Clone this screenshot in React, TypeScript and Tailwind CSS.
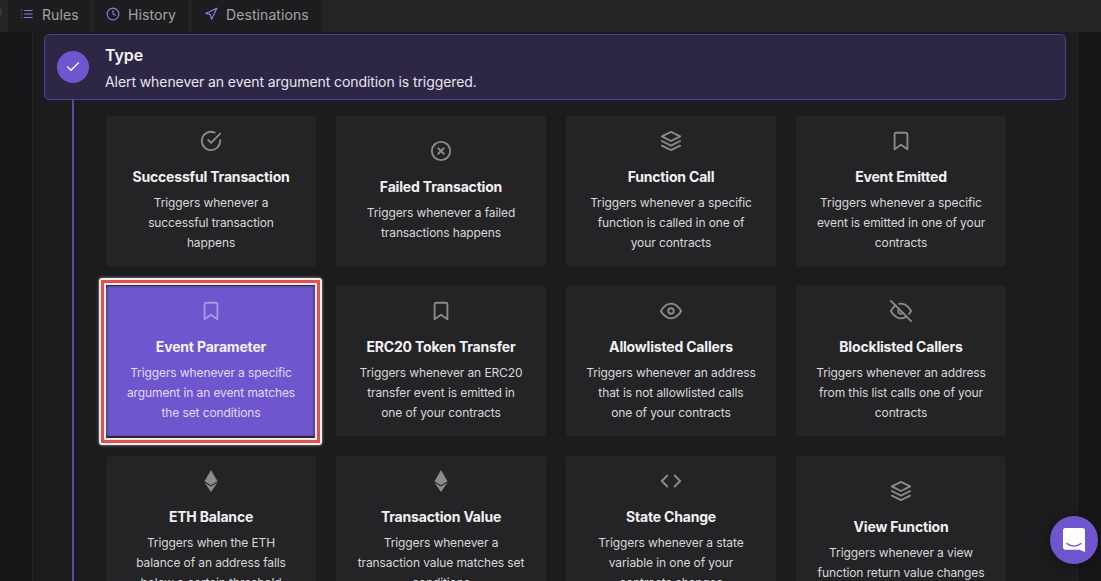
import type { IconType } from "react-icons";
import { FiBookmark, FiCheck, FiCheckCircle, FiClock, FiCode, FiEye, FiEyeOff, FiLayers, FiList, FiNavigation, FiXCircle } from "react-icons/fi";
import { FaEthereum } from "react-icons/fa";

type Trigger = { icon: IconType; title: string; lines: string[]; selected?: boolean };

const triggers: Trigger[] = [
  { icon: FiCheckCircle, title: "Successful Transaction", lines: ["Triggers whenever a", "successful transaction", "happens"] },
  { icon: FiXCircle, title: "Failed Transaction", lines: ["Triggers whenever a failed", "transactions happens"] },
  { icon: FiLayers, title: "Function Call", lines: ["Triggers whenever a specific", "function is called in one of", "your contracts"] },
  { icon: FiBookmark, title: "Event Emitted", lines: ["Triggers whenever a specific", "event is emitted in one of your", "contracts"] },
  { icon: FiBookmark, title: "Event Parameter", lines: ["Triggers whenever a specific", "argument in an event matches", "the set conditions"], selected: true },
  { icon: FiBookmark, title: "ERC20 Token Transfer", lines: ["Triggers whenever an ERC20", "transfer event is emitted in", "one of your contracts"] },
  { icon: FiEye, title: "Allowlisted Callers", lines: ["Triggers whenever an address", "that is not allowlisted calls", "one of your contracts"] },
  { icon: FiEyeOff, title: "Blocklisted Callers", lines: ["Triggers whenever an address", "from this list calls one of your", "contracts"] },
  { icon: FaEthereum, title: "ETH Balance", lines: ["Triggers when the ETH", "balance of an address falls", "below a certain threshold"] },
  { icon: FaEthereum, title: "Transaction Value", lines: ["Triggers whenever a", "transaction value matches set", "conditions"] },
  { icon: FiCode, title: "State Change", lines: ["Triggers whenever a state", "variable in one of your", "contracts changes"] },
  { icon: FiLayers, title: "View Function", lines: ["Triggers whenever a view", "function return value changes"] },
];

function Tab({ icon: Icon, label, className }: { icon: IconType; label: string; className: string }) {
  return (
    <div className={`flex h-8 items-start bg-[#1d1d1f] pt-[5px] ${className}`}>
      <Icon size={14} className="mt-[2px] shrink-0 text-[#8d7be0]" />
      <span className="ml-2 text-[14px] leading-5 tracking-[0.08px] whitespace-nowrap text-[#a3a3a6]">{label}</span>
    </div>
  );
}

function TriggerCard({ icon: Icon, title, lines, selected }: Trigger) {
  return (
    <div className={`relative flex h-[150px] flex-col items-center justify-center rounded-[2px] pt-px text-center ${selected ? "bg-[#6f56cf]" : "bg-[#242426]"}`}>
      <Icon size={22} className={selected ? "text-[#a899e2]" : "text-[#8b8b8d]"} />
      <h3 className="mt-[13px] text-[14px] leading-6 font-bold tracking-[-0.18px] text-[#f1f1f3]">{title}</h3>
      <p className={`mt-1 text-[12px] leading-5 tracking-[-0.1px] whitespace-nowrap ${selected ? "text-[#e0daf6]" : "text-[#d8d8da]"}`}>
        {lines.map((line) => (
          <span key={line} className="block">{line}</span>
        ))}
      </p>
      {selected && (
        <div className="absolute -top-2 -right-1.5 -bottom-[9px] -left-[7px] rounded-[3px] border-2 border-[#f3eeee] shadow-[0_0_3px_rgba(255,255,255,0.6)]">
          <div className="h-full border-[3px] border-[#e05252]">
            <div className="h-full border-2 border-[#eeeaea] shadow-[inset_0_0_3px_1px_rgba(60,55,80,0.9)]" />
          </div>
        </div>
      )}
    </div>
  );
}

export default function App() {
  return (
    <div className="flex h-[581px] w-[1101px] flex-col overflow-hidden bg-[#161618] font-['Inter',sans-serif]">
      <nav className="flex h-8 shrink-0 gap-1 bg-[#242426]">
        <div className="h-8 w-1 overflow-hidden">
          <div className="mt-1 -ml-4 h-4 w-[18px] rounded-full bg-[#39393b]" />
        </div>
        <Tab icon={FiList} label="Rules" className="w-[82px] pl-3" />
        <Tab icon={FiClock} label="History" className="w-[94px] pl-3" />
        <Tab icon={FiNavigation} label="Destinations" className="w-[129px] pl-3" />
      </nav>
      <main className="ml-8 h-[549px] w-[1046px] border-x border-[#262628] bg-[#1c1c1e] pt-[2px] pl-[11px]">
        <header className="flex h-[66px] w-[1022px] items-center rounded-[5px] border border-[#4d3f8f] bg-[#2d2745] pl-3">
          <div className="flex size-8 items-center justify-center rounded-full bg-[#6f56cf]">
            <FiCheck size={16} className="text-white" />
          </div>
          <div className="ml-4 pt-[3px]">
            <h2 className="text-[16px] leading-6 font-semibold tracking-[-0.1px] text-[#f1f1f3]">Type</h2>
            <p className="mt-[3px] text-[14px] leading-6 tracking-[-0.08px] text-[#e6e4ee]">Alert whenever an event argument condition is triggered.</p>
          </div>
        </header>
        <section className="ml-7 border-l-2 border-[#5b4aa6] pt-4 pl-8">
          <div className="grid w-[900px] grid-cols-4 gap-5">
            {triggers.map((trigger) => (
              <TriggerCard key={trigger.title} {...trigger} />
            ))}
          </div>
        </section>
      </main>
      <button aria-label="Open chat" className="absolute top-[516px] left-[1050px] flex size-12 items-center justify-center rounded-full bg-[#6f56cf] shadow-[0_2px_12px_rgba(0,0,0,0.35)]">
        <svg width="22" height="24" viewBox="0 0 22 24">
          <path d="M2.2 0h17.6C21 0 22 1 22 2.200V24l-5.500-2.200H2.200C1 21.800 0 20.800 0 19.600V2.200C0 1 1 0 2.200 0Z" fill="#fff" />
          <path d="M4 15.500C8 19 14 19 18 15.500" fill="none" stroke="#6f56cf" strokeWidth="1.300" strokeLinecap="round" />
        </svg>
      </button>
    </div>
  );
}
